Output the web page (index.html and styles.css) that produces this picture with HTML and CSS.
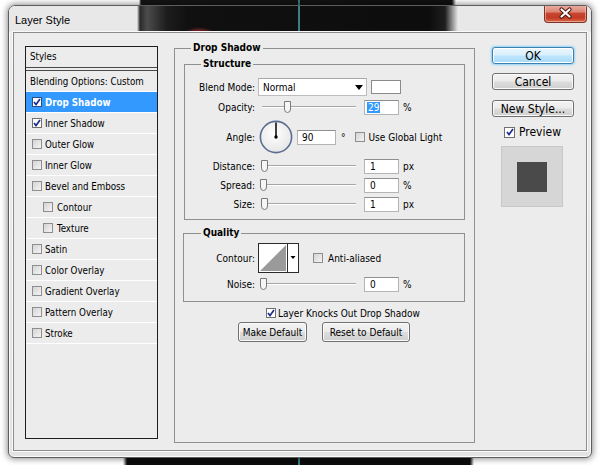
FILE: index.html
```html
<!DOCTYPE html>
<html>
<head>
<meta charset="utf-8">
<title>Layer Style</title>
<link rel="stylesheet" href="styles.css">
</head>
<body>
<div class="desktop">
  <div class="window">
    <div class="titlebar">
      <span class="title">Layer Style</span>
      <span class="close">
        <svg width="43" height="18" viewBox="0 0 43 18"><g transform="translate(21.5 9)"><path d="M-4 -3.5 L4 3.5 M4 -3.5 L-4 3.5" stroke="#4a140c" stroke-width="4.2" stroke-linecap="round"/><path d="M-4 -3.5 L4 3.5 M4 -3.5 L-4 3.5" stroke="#fff" stroke-width="2.2" stroke-linecap="round"/></g></svg>
      </span>
    </div>
    <div class="client">
      <div class="styles-list">
        <div class="list-head">Styles</div>
        <div class="row plain">Blending Options: Custom</div>
        <div class="row selected"><span class="cb on"></span>Drop Shadow</div>
        <div class="row"><span class="cb on"></span>Inner Shadow</div>
        <div class="row"><span class="cb"></span>Outer Glow</div>
        <div class="row"><span class="cb"></span>Inner Glow</div>
        <div class="row"><span class="cb"></span>Bevel and Emboss</div>
        <div class="row sub"><span class="cb"></span>Contour</div>
        <div class="row sub"><span class="cb"></span>Texture</div>
        <div class="row"><span class="cb"></span>Satin</div>
        <div class="row"><span class="cb"></span>Color Overlay</div>
        <div class="row"><span class="cb"></span>Gradient Overlay</div>
        <div class="row"><span class="cb"></span>Pattern Overlay</div>
        <div class="row"><span class="cb"></span>Stroke</div>
      </div>

      <fieldset class="group outer">
        <legend class="lg-outer">Drop Shadow</legend>
        <fieldset class="group structure">
          <legend class="lg-structure">Structure</legend>
          <div class="frow r-blend">
            <span class="label">Blend Mode:</span>
            <span class="select">Normal<svg class="sel-arrow" width="8" height="5" viewBox="0 0 8 5"><path d="M0 0 H8 L4 5 Z" fill="#000"/></svg></span>
            <span class="swatch"></span>
          </div>
          <div class="frow r-std">
            <span class="label">Opacity:</span>
            <span class="slider"><span class="track"></span><svg class="thumb" style="left:24px" width="9" height="14" viewBox="0 0 9 14"><path d="M1.5 1.5 H7.5 V9 Q7.5 12.5 4.5 12.5 Q1.5 12.5 1.5 9 Z" fill="#f6f6f6" stroke="#7a7a7a"/></svg></span>
            <span class="field"><span class="sel-text">29</span></span>
            <span class="unit">%</span>
          </div>
          <div class="frow r-angle">
            <span class="label">Angle:</span>
            <svg class="dial" width="34" height="34" viewBox="0 0 34 34"><defs><radialGradient id="dg" cx="45%" cy="40%" r="65%"><stop offset="0" stop-color="#ffffff"/><stop offset="1" stop-color="#e4e4e4"/></radialGradient></defs><circle cx="17" cy="17" r="15.6" fill="url(#dg)" stroke="#5b6c92" stroke-width="1.6"/><line x1="17" y1="17" x2="17" y2="2.5" stroke="#000" stroke-width="1.5"/><circle cx="17" cy="17" r="1.7" fill="#000"/></svg>
            <span class="field wide">90</span>
            <span class="unit deg">°</span>
            <span class="cb gl"></span><span class="cb-text">Use Global Light</span>
          </div>
          <div class="frow r-std">
            <span class="label">Distance:</span>
            <span class="slider"><span class="track"></span><svg class="thumb" style="left:1px" width="9" height="14" viewBox="0 0 9 14"><path d="M1.5 1.5 H7.5 V9 Q7.5 12.5 4.5 12.5 Q1.5 12.5 1.5 9 Z" fill="#f6f6f6" stroke="#7a7a7a"/></svg></span>
            <span class="field">1</span>
            <span class="unit">px</span>
          </div>
          <div class="frow r-std">
            <span class="label">Spread:</span>
            <span class="slider"><span class="track"></span><svg class="thumb" style="left:0px" width="9" height="14" viewBox="0 0 9 14"><path d="M1.5 1.5 H7.5 V9 Q7.5 12.5 4.5 12.5 Q1.5 12.5 1.5 9 Z" fill="#f6f6f6" stroke="#7a7a7a"/></svg></span>
            <span class="field">0</span>
            <span class="unit">%</span>
          </div>
          <div class="frow r-std">
            <span class="label">Size:</span>
            <span class="slider"><span class="track"></span><svg class="thumb" style="left:1px" width="9" height="14" viewBox="0 0 9 14"><path d="M1.5 1.5 H7.5 V9 Q7.5 12.5 4.5 12.5 Q1.5 12.5 1.5 9 Z" fill="#f6f6f6" stroke="#7a7a7a"/></svg></span>
            <span class="field">1</span>
            <span class="unit">px</span>
          </div>
        </fieldset>

        <fieldset class="group quality">
          <legend class="lg-quality">Quality</legend>
          <div class="frow r-contour">
            <span class="label">Contour:</span>
            <svg class="contour" width="41" height="30" viewBox="0 0 41 30"><rect x="0.5" y="0.5" width="40" height="29" fill="#fff" stroke="#2a2a2a"/><path d="M2 28 L28 2 L28 28 Z" fill="#9a9a9a"/><line x1="29.5" y1="1" x2="29.5" y2="29" stroke="#2a2a2a"/><path d="M32.5 13 H37.5 L35 16 Z" fill="#000"/></svg>
            <span class="cb aa"></span><span class="cb-text">Anti-aliased</span>
          </div>
          <div class="frow r-std">
            <span class="label">Noise:</span>
            <span class="slider"><span class="track"></span><svg class="thumb" style="left:0px" width="9" height="14" viewBox="0 0 9 14"><path d="M1.5 1.5 H7.5 V9 Q7.5 12.5 4.5 12.5 Q1.5 12.5 1.5 9 Z" fill="#f6f6f6" stroke="#7a7a7a"/></svg></span>
            <span class="field">0</span>
            <span class="unit">%</span>
          </div>
        </fieldset>

        <div class="knock"><span class="cb on"></span><span class="cb-text">Layer Knocks Out Drop Shadow</span></div>
        <div class="btnrow">
          <span class="btn b-make">Make Default</span>
          <span class="btn b-reset">Reset to Default</span>
        </div>
      </fieldset>

      <div class="side">
        <span class="btn big ok">OK</span>
        <span class="btn big cancel">Cancel</span>
        <span class="btn big newstyle">New Style...</span>
        <div class="preview-row"><span class="cb on big-cb"></span><span>Preview</span></div>
        <div class="preview"><span class="preview-swatch"></span></div>
      </div>
    </div>
  </div>
</div>
</body>
</html>
```
FILE: styles.css
```css
* { box-sizing: border-box; }
html, body { margin: 0; padding: 0; }
body {
  width: 600px;
  height: 465px;
  overflow: hidden;
  font-family: "DejaVu Sans Condensed", "DejaVu Sans", sans-serif;
  font-size: 10px;
  color: #000;
}

.desktop {
  width: 600px;
  height: 465px;
  padding: 5px 8px 0 8px;
  background:
    linear-gradient(to right, transparent 298px, #3a7f82 298px, #3a7f82 300px, transparent 300px) 0 0 / 100% 6px no-repeat,
    linear-gradient(to right, transparent 298px, #3a7f82 298px, #3a7f82 300px, transparent 300px) 0 100% / 100% 10px no-repeat,
    linear-gradient(to right, #ffffff 139px, #151515 141px, #101010 452px, #ffffff 456px) 0 0 / 100% 6px no-repeat,
    linear-gradient(to right, #ffffff 123px, #0c0c0c 127px, #0c0c0c 470px, #ffffff 474px) 0 100% / 100% 10px no-repeat,
    #ffffff;
}

.window {
  width: 584px;
  height: 453px;
  border: 1px solid #5e5e5e;
  border-radius: 7px 7px 6px 6px;
  background: linear-gradient(#ededed, #e3e3e3);
  box-shadow: 0 0 6px 1px rgba(0, 0, 0, 0.45), inset 0 0 0 1px rgba(255, 255, 255, 0.8);
  display: flex;
  flex-direction: column;
  overflow: hidden;
}

.titlebar {
  height: 26px;
  flex: none;
  display: flex;
  align-items: flex-start;
  justify-content: space-between;
  padding: 0 4px 0 6px;
  background:
    radial-gradient(ellipse 20px 14px at 190px 35px, #c93434 0, #b82c2c 55%, rgba(170, 40, 40, 0) 100%),
    linear-gradient(to right, transparent 289px, #3a7f82 289px, #3a7f82 291px, transparent 291px),
    linear-gradient(to right, #e8e8e8 128px, #2a2a2a 131px, #4c4c4c 138px, #1c1c1c 158px, #101010 180px, #0d0d0d 420px, #1e1e1e 436px, #8c8c8c 443px, #e8e8e8 449px);
}

.title {
  font-family: "Liberation Sans", "DejaVu Sans", sans-serif;
  font-size: 11px;
  line-height: 14px;
  margin-top: 7px;
  color: #000;
}

.close {
  display: block;
  width: 43px;
  height: 18px;
  margin-top: -1px;
  border: 1px solid #7e3226;
  border-top: none;
  border-radius: 0 0 4px 4px;
  background: linear-gradient(#eab0a4 0%, #dc8676 40%, #c8452f 50%, #c23b25 75%, #d86848 100%);
  box-shadow: inset 0 0 0 1px rgba(255, 220, 210, 0.5);
}
.close svg { display: block; margin: -1px 0 0 -1px; }

.client {
  flex: none;
  height: 419px;
  margin: 0 4px;
  border: 1px solid #8c8c8c;
  background: #ececec;
  box-shadow: 0 0 0 1px #fafafa;
  display: flex;
  align-items: flex-start;
  padding: 13px 12px 0 11px;
}

/* Styles list */
.styles-list {
  width: 133px;
  height: 393px;
  flex: none;
  border: 1px solid #1e1e1e;
  background: #ececec;
  font-size: 9.7px;
}
.list-head {
  height: 24px;
  line-height: 20px;
  padding-left: 4px;
  border-bottom: 4px double #4a4a4a;
}
.row {
  height: 21px;
  border-bottom: 1px solid #ffffff;
  display: flex;
  align-items: center;
  padding-left: 6px;
  white-space: nowrap;
}
.row.plain { padding-left: 4px; }
.row.sub { padding-left: 17px; }
.row.sub .cb { margin-right: 4px; }
.row.selected {
  background: #3399ff;
  color: #ffffff;
  font-weight: bold;
}

.cb {
  display: inline-block;
  flex: none;
  width: 10px;
  height: 10px;
  margin-right: 3px;
  border: 1px solid #8e8e8e;
  background: linear-gradient(135deg, #d4d4d4, #f4f4f4);
}
.cb.on {
  border-color: #707070;
  background: #ffffff url("data:image/svg+xml;utf8,<svg xmlns='http://www.w3.org/2000/svg' width='8' height='8' viewBox='0 0 8 8'><path d='M1 4 L3 6.5 L7 1' fill='none' stroke='%231c2e8e' stroke-width='1.7'/></svg>") center / 8px 8px no-repeat;
}
.selected .cb.on { border-color: #2a4f88; }

/* Group boxes */
.group {
  margin: 0;
  border: 1px solid #909090;
  min-width: 0;
}
.group legend {
  font-weight: bold;
  line-height: 12px;
  padding: 0 2px;
}

.outer {
  width: 301px;
  height: 401px;
  flex: none;
  margin: -4px 0 0 16px;
  padding: 4px 9px 0 9px;
}
.lg-outer { margin-left: 7px; }

.structure {
  width: 281px;
  padding: 8px 0 7px 0;
}
.lg-structure { margin-left: 16px; }

.quality {
  width: 282px;
  margin: 7px 0 0 -1px;
  padding: 4px 0 9px 0;
}
.lg-quality { margin-left: 17px; }

.frow {
  display: flex;
  align-items: center;
  white-space: nowrap;
}
.label {
  width: 70px;
  flex: none;
  text-align: right;
  margin-right: 3px;
}
.quality .label { width: 71px; }

.r-blend { height: 18px; }
.r-std { height: 15px; margin-top: 4px; }
.r-angle { height: 36px; margin-top: 4px; }
.r-contour { height: 30px; }

.select {
  width: 109px;
  height: 18px;
  flex: none;
  display: flex;
  align-items: center;
  justify-content: space-between;
  padding: 0 3px 0 4px;
  background: #ffffff;
  border: 1px solid #bdbdbd;
  border-top-color: #a8a8a8;
}
.sel-arrow { display: block; }

.swatch {
  width: 30px;
  height: 14px;
  flex: none;
  margin-left: 4px;
  background: #ffffff;
  border: 1px solid #8a8a8a;
}

.slider {
  position: relative;
  width: 100px;
  height: 15px;
  flex: none;
  margin-left: 1px;
}
.track {
  position: absolute;
  left: 3px;
  right: 3px;
  top: 6px;
  height: 2px;
  border-top: 1px solid #a6a6a6;
  border-bottom: 1px solid #ffffff;
}
.thumb {
  position: absolute;
  top: 0;
  display: block;
}

.field {
  width: 35px;
  height: 15px;
  flex: none;
  margin-left: 5px;
  padding-left: 5px;
  line-height: 13px;
  background: #ffffff;
  border: 1px solid #b4b4b4;
  border-top-color: #8f8f8f;
}
.field.wide { width: 39px; margin-left: 4px; padding-left: 4px; }
.sel-text {
  background: #3399ff;
  color: #ffffff;
  padding: 0 1px;
  margin-left: -3px;
}
.unit { margin-left: 4px; }
.unit.deg { margin-left: 5px; }

.dial { display: block; flex: none; margin-left: 1px; }

.cb-text { white-space: nowrap; }
.cb.gl { margin-left: 9px; margin-right: 4px; }
.contour { display: block; flex: none; }
.cb.aa { margin-left: 14px; margin-right: 5px; }

.knock {
  display: flex;
  align-items: center;
  height: 14px;
  margin: 4px 0 0 82px;
}
.knock .cb { margin-right: 2px; }

.btnrow {
  display: flex;
  gap: 15px;
  margin: 2px 0 0 54px;
}

.btn {
  display: flex;
  align-items: center;
  justify-content: center;
  flex: none;
  height: 20px;
  border: 1px solid #707070;
  border-radius: 3px;
  background: linear-gradient(#f3f3f3 0%, #ebebeb 48%, #dddddd 52%, #cfcfcf 100%);
  box-shadow: inset 0 0 0 1px #fbfbfb;
  white-space: nowrap;
}
.b-make { width: 69px; }
.b-reset { width: 88px; }

/* Side column */
.side {
  width: 82px;
  flex: none;
  margin: 1px 0 0 17px;
  display: flex;
  flex-direction: column;
  font-size: 12px;
}
.btn.big { width: 82px; height: 17px; font-size: 12px; }
.ok {
  border-color: #3c7fb1;
  background: linear-gradient(#eaf6fd 0%, #d9f0fc 48%, #bee6fd 52%, #a7d9f5 100%);
  box-shadow: inset 0 0 0 1px #ffffff, 0 0 2px 1px #8fd3f7;
}
.cancel { margin-top: 9px; }
.newstyle { margin-top: 10px; }

.preview-row {
  display: flex;
  align-items: center;
  height: 12px;
  margin: 9px 0 0 12px;
}
.big-cb { width: 11px; height: 11px; margin-right: 4px; }

.preview {
  width: 62px;
  height: 61px;
  margin: 8px 0 0 9px;
  background: #d6d6d6;
  border: 1px solid #c8c8c8;
  display: flex;
  align-items: center;
  justify-content: center;
}
.preview-swatch {
  width: 30px;
  height: 30px;
  background: #4a4a4a;
}
```
